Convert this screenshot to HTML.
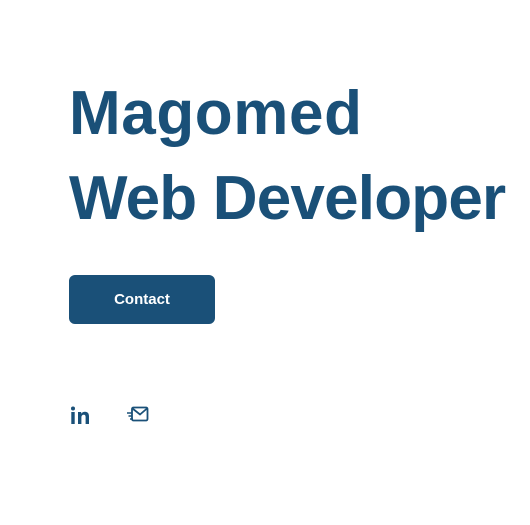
<!DOCTYPE html>
<html><head><style>
html,body{margin:0;padding:0;background:#fff;width:530px;height:525px;overflow:hidden;font-family:"Liberation Sans",sans-serif;}
.h{position:absolute;left:69px;color:#1a5078;font-weight:bold;font-size:62px;line-height:1;white-space:nowrap}
.btn{position:absolute;left:69px;top:275px;width:146px;height:49px;background:#1a5078;border-radius:6px;color:#fff;font-weight:bold;font-size:15px;display:flex;align-items:center;justify-content:center}
</style></head><body>
<div class="h" style="top:83px;letter-spacing:0.6px">Magomed</div>
<div class="h" style="top:168px;letter-spacing:-0.8px">Web Developer</div>
<div class="btn">Contact</div>
<svg style="position:absolute;left:70px;top:405px" width="22" height="22" viewBox="0 0 22 22">
<circle cx="3" cy="3.5" r="2" fill="#1a5078"/>
<rect x="1.3" y="7" width="3.4" height="12" fill="#1a5078"/>
<path d="M8 7h3.2v1.8c.8-1.4 2.2-2.1 3.8-2.1 2.8 0 4 1.8 4 4.6V19h-3.4v-7c0-1.4-.5-2.3-1.8-2.3s-2.4.9-2.4 2.6V19H8z" fill="#1a5078"/>
</svg>
<svg style="position:absolute;left:126px;top:405px" width="24" height="20" viewBox="0 0 24 20">
<rect x="6" y="2.5" width="15.5" height="13" rx="1.5" fill="none" stroke="#1a5078" stroke-width="1.8"/>
<path d="M6.5 3.5l7.5 6 7-6" fill="none" stroke="#1a5078" stroke-width="1.8"/>
<path d="M1 8h5M2.5 11h4M4 14h3" stroke="#1a5078" stroke-width="1.6"/>
</svg>
</body></html>
